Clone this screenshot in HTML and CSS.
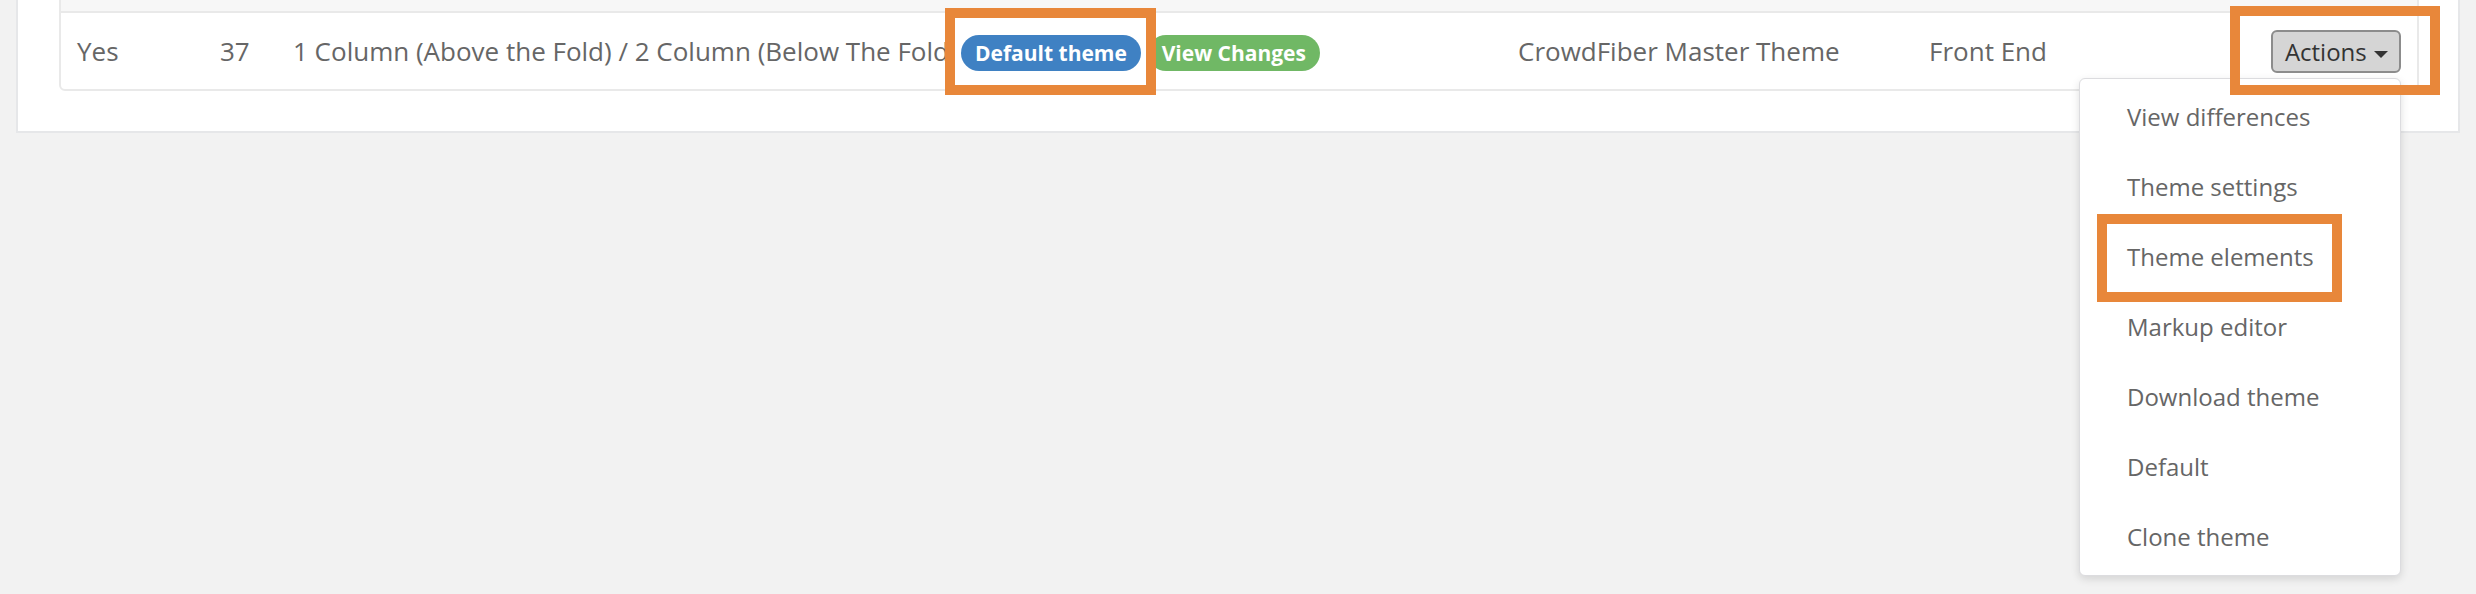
FILE: index.html
```html
<!DOCTYPE html>
<html lang="en">

<head>
    <meta charset="UTF-8">
    <title>Themes</title>
    <link rel="stylesheet" href="styles.css">
</head>

<body>
    <div class="panel">
        <table class="themes">
            <colgroup>
                <col style="width: 143px">
                <col style="width: 73px">
                <col style="width: 668px">
                <col style="width: 557px">
                <col style="width: 411px">
                <col style="width: 287px">
                <col style="width: 217px">
            </colgroup>
            <thead>
                <tr>
                    <th></th>
                    <th></th>
                    <th></th>
                    <th></th>
                    <th></th>
                    <th></th>
                    <th></th>
                </tr>
            </thead>
            <tbody>
                <tr>
                    <td>Yes</td>
                    <td>37</td>
                    <td class="title">1 Column (Above the Fold) / 2 Column (Below The Fold)</td>
                    <td>
                        <span class="badge badge-blue">Default theme<span class="mark mark-badge"></span></span>
                        <span class="badge badge-green">View Changes</span>
                    </td>
                    <td>CrowdFiber Master Theme</td>
                    <td>Front End</td>
                    <td class="actions">
                        <span class="dropdown">
                            <button type="button" class="btn">Actions <span class="caret"></span></button>
                            <span class="mark mark-btn"></span>
                            <ul class="menu">
                                <li>View differences</li>
                                <li>Theme settings</li>
                                <li>Theme elements<span class="mark mark-item"></span></li>
                                <li>Markup editor</li>
                                <li>Download theme</li>
                                <li>Default</li>
                                <li>Clone theme</li>
                            </ul>
                        </span>
                    </td>
                </tr>
            </tbody>
        </table>
    </div>
</body>

</html>
```

FILE: styles.css
```css
body {
    margin: 0;
    height: 594px;
    background-color: #f2f2f2;
    font-family: 'Open Sans', 'Liberation Sans', sans-serif;
    color: #666;
    overflow: hidden;
}

.panel {
    margin: -46px 16px 0 16px;
    padding: 42px 39px 40px 41px;
    background-color: #fff;
    border: 2px solid #e6e7e9;
}

.themes {
    width: 100%;
    table-layout: fixed;
    border-collapse: separate;
    border-spacing: 0;
    border: 2px solid #e9e9e9;
    border-radius: 0 0 6px 6px;
}

.themes th {
    height: 11px;
    padding: 0;
    background-color: #f7f7f7;
    border-bottom: 2px solid #e9e9e9;
}

.themes td {
    height: 76px;
    padding: 0 16px;
    font-size: 26px;
    white-space: nowrap;
    vertical-align: middle;
}

.themes td.title {
    overflow: hidden;
}

.badge {
    display: inline-block;
    position: relative;
    height: 36px;
    line-height: 36px;
    padding: 0 14px;
    border-radius: 18px;
    font-size: 21px;
    font-weight: 700;
    color: #fff;
    vertical-align: middle;
}

.badge-blue {
    background-color: #3f81c3;
}

.badge-green {
    background-color: #70b865;
}

.actions {
    text-align: right;
}

.dropdown {
    position: relative;
    display: inline-block;
}

.btn {
    height: 43px;
    padding: 0 11px 0 12px;
    font-family: inherit;
    font-size: 24px;
    color: #333;
    background-color: #d5d5d5;
    border: 2px solid #8c8c8c;
    border-radius: 6px;
    vertical-align: middle;
}

.caret {
    display: inline-block;
    width: 0;
    height: 0;
    margin-left: 1px;
    vertical-align: middle;
    border-top: 7px solid #333;
    border-left: 7px solid transparent;
    border-right: 7px solid transparent;
}

.menu {
    position: absolute;
    top: calc(100% + 5px);
    right: 0;
    z-index: 10;
    width: 320px;
    margin: 0;
    padding: 3px 0;
    list-style: none;
    text-align: left;
    background-color: #fff;
    border: 1px solid #dcdcdf;
    border-radius: 6px;
    box-shadow: 0 3px 8px rgba(0, 0, 0, 0.13);
}

.menu li {
    position: relative;
    height: 70px;
    line-height: 70px;
    padding-left: 47px;
    font-size: 24px;
    color: #666;
}

/* orange highlight boxes drawn on the screenshot */
.mark {
    position: absolute;
    z-index: 20;
    box-sizing: border-box;
    border: 10px solid #e8873a;
}

.mark-badge {
    left: -16px;
    top: -27px;
    width: 211px;
    height: 87px;
}

.mark-btn {
    left: -41px;
    top: -24px;
    width: 210px;
    height: 89px;
}

.mark-item {
    left: 17px;
    top: -8px;
    width: 245px;
    height: 88px;
}
```
